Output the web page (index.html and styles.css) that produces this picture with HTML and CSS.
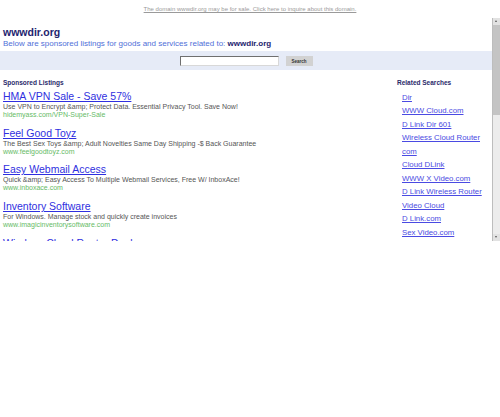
FILE: index.html
```html
<!DOCTYPE html>
<html>
<head>
<meta charset="utf-8">
<title>wwwdir.org</title>
<link rel="stylesheet" href="styles.css">
</head>
<body>
<div class="topbar"><a href="#">The domain wwwdir.org may be for sale. Click here to inquire about this domain.</a></div>
<div class="frame">
  <div class="content">
    <h1 class="title">wwwdir.org</h1>
    <p class="sub">Below are sponsored listings for goods and services related to: <b>wwwdir.org</b></p>
    <div class="band">
      <input class="field" type="text">
      <button class="btn">Search</button>
    </div>
    <div class="cols">
      <div class="ads">
        <div class="head">Sponsored Listings</div>
        <div class="ad">
          <a class="ad-title" href="#">HMA VPN Sale - Save 57%</a>
          <div class="ad-desc">Use VPN to Encrypt &amp;amp; Protect Data. Essential Privacy Tool. Save Now!</div>
          <div class="ad-url">hidemyass.com/VPN-Super-Sale</div>
        </div>
        <div class="ad">
          <a class="ad-title" href="#">Feel Good Toyz</a>
          <div class="ad-desc">The Best Sex Toys &amp;amp; Adult Novelties Same Day Shipping -$ Back Guarantee</div>
          <div class="ad-url">www.feelgoodtoyz.com</div>
        </div>
        <div class="ad">
          <a class="ad-title" href="#">Easy Webmail Access</a>
          <div class="ad-desc">Quick &amp;amp; Easy Access To Multiple Webmail Services, Free W/ InboxAce!</div>
          <div class="ad-url">www.inboxace.com</div>
        </div>
        <div class="ad">
          <a class="ad-title" href="#">Inventory Software</a>
          <div class="ad-desc">For Windows. Manage stock and quickly create invoices</div>
          <div class="ad-url">www.imagicinventorysoftware.com</div>
        </div>
        <div class="ad">
          <a class="ad-title" href="#">Wireless Cloud Router Deals</a>
          <div class="ad-desc">Compare prices and save on top brands.</div>
          <div class="ad-url">www.example.com</div>
        </div>
      </div>
      <div class="related">
        <div class="head">Related Searches</div>
        <ul class="rel-list">
          <li><a href="#">Dir</a></li>
          <li><a href="#">WWW Cloud.com</a></li>
          <li><a href="#">D Link Dir 601</a></li>
          <li><a href="#">Wireless Cloud Router com</a></li>
          <li><a href="#">Cloud DLink</a></li>
          <li><a href="#">WWW X Video.com</a></li>
          <li><a href="#">D Link Wireless Router</a></li>
          <li><a href="#">Video Cloud</a></li>
          <li><a href="#">D Link.com</a></li>
          <li><a href="#">Sex Video.com</a></li>
        </ul>
      </div>
    </div>
  </div>
  <div class="scrollbar">
    <div class="arrow up"></div>
    <div class="thumb"></div>
    <div class="track"></div>
    <div class="arrow down"></div>
  </div>
</div>
</body>
</html>
```

FILE: styles.css
```css
html, body {
  margin: 0;
  padding: 0;
  background: #ffffff;
  font-family: "Liberation Sans", Arial, sans-serif;
}

.topbar {
  height: 16px;
  text-align: center;
  font-size: 6px;
  line-height: 18px;
}
.topbar a {
  color: #9a9a9a;
  text-decoration: underline;
}

.frame {
  display: flex;
  height: 225px;
  overflow: hidden;
}

.content {
  flex: 1;
  min-width: 0;
  padding-top: 10px;
  font-size: 7px;
  line-height: 8px;
}

.title {
  margin: 0 0 1px 3px;
  font-size: 10.5px;
  line-height: 12px;
  font-weight: bold;
  color: #23236e;
}

.sub {
  margin: 0 0 2px 3px;
  font-size: 8px;
  line-height: 10px;
  color: #4f6fd8;
}
.sub b {
  color: #23236e;
}

.band {
  height: 19px;
  background: #e6ebf7;
  display: flex;
  align-items: center;
  justify-content: center;
  gap: 7px;
}

.field {
  box-sizing: border-box;
  width: 99px;
  height: 10px;
  margin: 0;
  padding: 0;
  background: #fff;
  border-style: solid;
  border-width: 1px;
  border-color: #6f6f6f #d8d8d8 #d8d8d8 #6f6f6f;
}

.btn {
  box-sizing: border-box;
  width: 27px;
  height: 10px;
  margin: 1px 0 0 0;
  padding: 0;
  border: none;
  background: #d2d2d2;
  color: #333;
  font-family: "Liberation Sans", Arial, sans-serif;
  font-size: 4.5px;
  font-weight: bold;
}

.cols {
  display: flex;
  margin-top: 9px;
}

.ads {
  flex: 1;
  min-width: 0;
  padding-left: 3px;
}

.head {
  font-size: 6.5px;
  line-height: 8px;
  font-weight: bold;
  color: #2a2a6a;
  margin-bottom: 3px;
}

.ad {
  margin-bottom: 7.7px;
}

.ad-title {
  display: block;
  width: max-content;
  font-size: 10.5px;
  line-height: 13px;
  color: #2f2fe0;
  text-decoration: underline;
}

.ad-desc {
  font-size: 7px;
  line-height: 8px;
  color: #555555;
  white-space: nowrap;
}

.ad-url {
  font-size: 7px;
  line-height: 8px;
  color: #66bb66;
}

.related {
  width: 95px;
  flex: none;
  padding-left: 5px;
}

.rel-list {
  list-style: none;
  margin: 0;
  padding: 0.5px 0 0 5px;
}
.rel-list li {
  font-size: 7.8px;
  line-height: 13.5px;
}
.rel-list a {
  color: #4a4ae2;
  text-decoration: underline;
}

.scrollbar {
  width: 8px;
  flex: none;
  display: flex;
  flex-direction: column;
  background: #ececec;
  border-left: 1px solid #bdbdbd;
  box-sizing: border-box;
  margin-top: 2px;
}
.arrow {
  height: 7px;
  flex: none;
  background: #e2e2e2;
  position: relative;
}
.arrow.up::after {
  content: "";
  position: absolute;
  left: 2px;
  top: 2px;
  border-left: 1.5px solid transparent;
  border-right: 1.5px solid transparent;
  border-bottom: 2px solid #555;
}
.arrow.down::after {
  content: "";
  position: absolute;
  left: 2px;
  top: 2px;
  border-left: 1.5px solid transparent;
  border-right: 1.5px solid transparent;
  border-top: 2px solid #555;
}
.thumb {
  height: 90px;
  flex: none;
  background: #c4c4c4;
}
.track {
  flex: 1;
}
```
